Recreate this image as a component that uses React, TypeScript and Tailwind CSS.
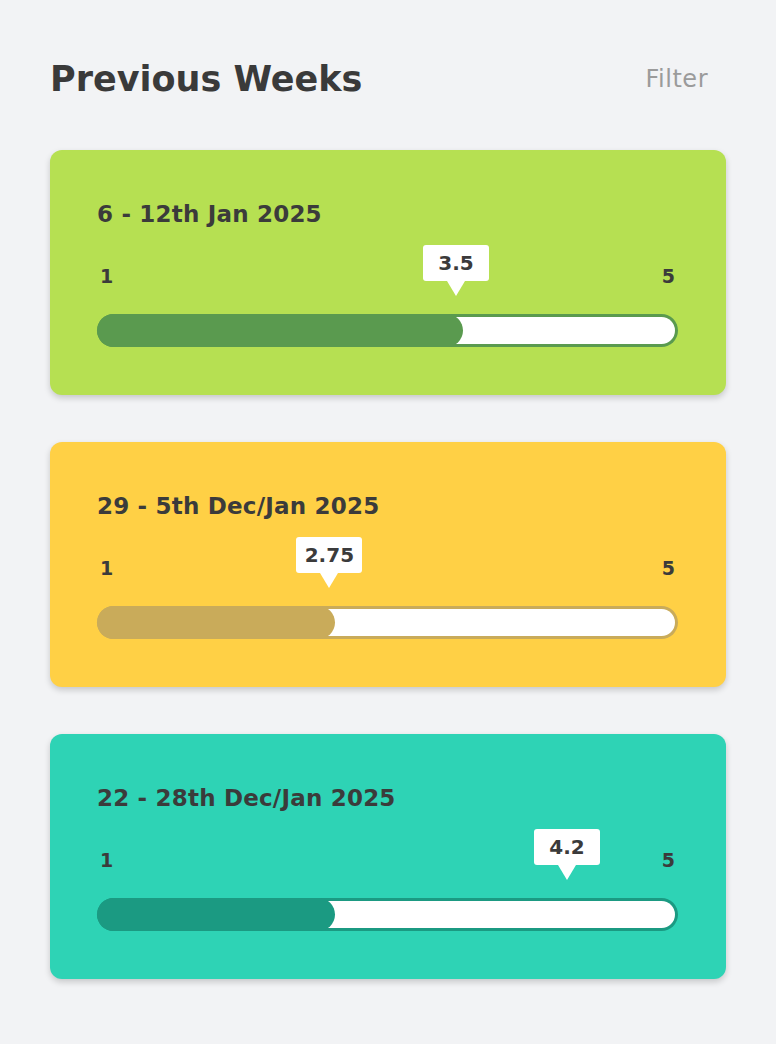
import React from 'react';

type Week = {
  label: string;
  value: string;
  tip: number; // tooltip position along the bar, %
  fill: number; // filled part of the bar, %
  card: string;
  bar: string;
};

const WEEKS: Week[] = [
  { label: '6 - 12th Jan 2025', value: '3.5', tip: 61.8, fill: 63, card: 'bg-[#b6e052]', bar: 'bg-[#5a9a4f]' },
  { label: '29 - 5th Dec/Jan 2025', value: '2.75', tip: 40, fill: 41, card: 'bg-[#ffd045]', bar: 'bg-[#c9ab5a]' },
  { label: '22 - 28th Dec/Jan 2025', value: '4.2', tip: 80.9, fill: 41, card: 'bg-[#2ed3b5]', bar: 'bg-[#1b9a82]' },
];

const font = { fontFamily: '"DejaVu Sans", sans-serif' };

function WeekCard({ week }: { week: Week }) {
  return (
    <div className={`${week.card} rounded-xl pt-[50px] pb-[48px] pl-[47px] pr-[48px] shadow-[0_3px_6px_rgba(0,0,0,0.18)]`}>
      <div className="text-[23px] leading-[28px] font-bold text-[#3b3b3b] tracking-[0.2px]">{week.label}</div>

      <div className="relative mt-[36px]">
        <div className="flex justify-between px-[3px] text-[19px] leading-[24px] font-semibold text-[#3b3b3b]">
          <span>1</span>
          <span>5</span>
        </div>

        {/* value bubble */}
        <div
          className="absolute top-[-19px] flex flex-col items-center -translate-x-1/2"
          style={{ left: `${week.tip}%` }}
        >
          <div className="w-[66px] h-[36px] rounded-[3px] bg-white flex items-center justify-center text-[20px] font-bold text-[#3b3b3b]">
            {week.value}
          </div>
          <div className="w-0 h-0 border-x-[9px] border-x-transparent border-t-[15px] border-t-white" />
        </div>

        <div className={`relative mt-[26px] h-[33px] rounded-full p-[3px] ${week.bar}`}>
          <div className="h-full rounded-full bg-white" />
          <div className={`absolute left-0 top-0 h-full rounded-full ${week.bar}`} style={{ width: `${week.fill}%` }} />
        </div>
      </div>
    </div>
  );
}

export default function App() {
  return (
    <div className="min-h-screen bg-[#f2f3f5] px-[50px] pt-[54px] pb-[66px]" style={font}>
      <div className="flex items-center justify-between">
        <h1 className="text-[35px] leading-[50px] font-bold text-[#3a3a3a]">Previous Weeks</h1>
        <button className="mr-[18px] text-[24px] text-[#9b9b9b] tracking-[0.5px]">Filter</button>
      </div>

      <div className="mt-[46px] flex flex-col gap-[47px]">
        {WEEKS.map((w) => (
          <WeekCard key={w.label} week={w} />
        ))}
      </div>
    </div>
  );
}
